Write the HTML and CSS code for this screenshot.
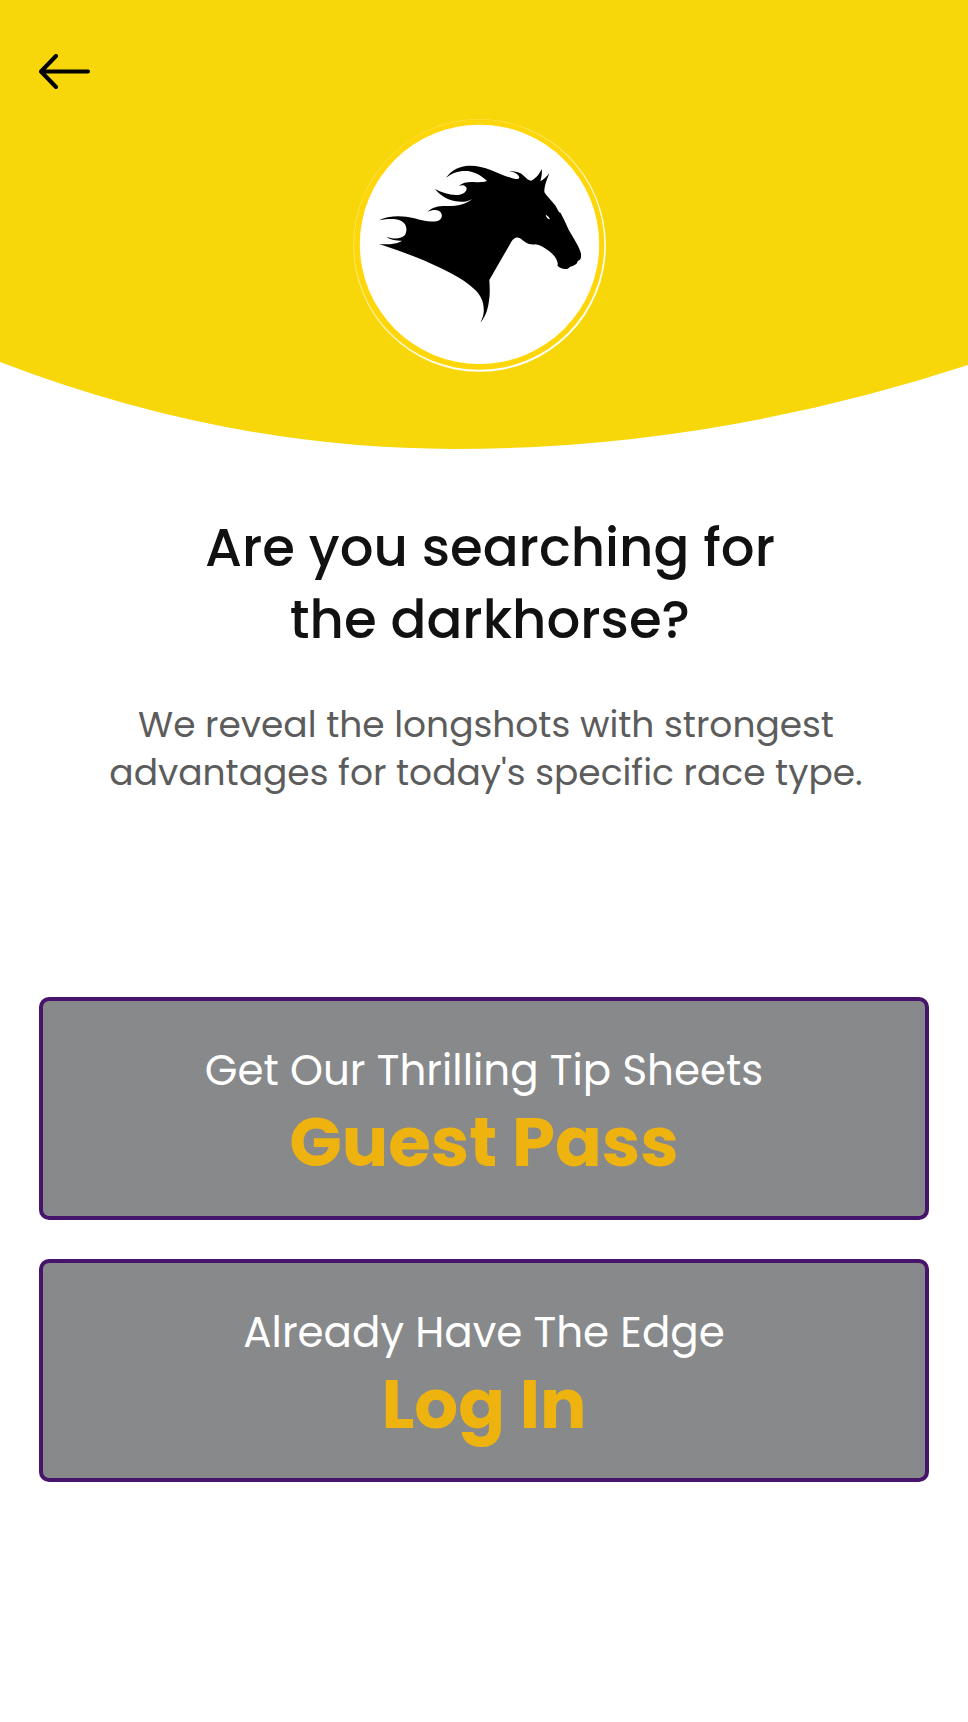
FILE: index.html
```html
<!DOCTYPE html>
<html lang="en">
<head>
<meta charset="utf-8">
<meta name="viewport" content="width=device-width, initial-scale=1">
<title>Darkhorse</title>
<link rel="stylesheet" href="styles.css">
</head>
<body>
<header class="hero">
  <svg class="hero-curve" viewBox="0 0 968 449" preserveAspectRatio="none" aria-hidden="true">
    <path d="M0 0H968V365Q711 449 454 449Q227 449 0 362Z"/>
  </svg>
  <button class="back" type="button" aria-label="Back">
    <svg viewBox="0 0 52 36" aria-hidden="true">
      <path d="M17 2L2 17.500L17 33M3 17.500H49"/>
    </svg>
  </button>
  <svg class="logo" viewBox="30 27 804 762" role="img" aria-label="Darkhorse logo">
    <defs>
      <linearGradient id="rim" x1="0" y1="0" x2="1" y2="1">
        <stop offset="0.300" stop-color="#fbe766"/>
        <stop offset="0.700" stop-color="#fff"/>
      </linearGradient>
    </defs>
    <circle fill="url(#rim)" cx="418.500" cy="406.500" r="379"/>
    <circle class="logo-ring" cx="417.500" cy="404" r="375.500"/>
    <circle class="logo-disc" cx="418.500" cy="403" r="359"/>
    <path class="logo-horse" d="M318 204C334 180 358 168 388 167C435 166 475 192 517 205C528 208 537 207 538 203C536 192 524 186 504 184C525 183 540 186 551 197C559 205 566 211 574 212C588 205 598 193 605 178C607 190 604 204 601 214C611 209 621 199 628 189C622 208 613 224 613 246C620 260 639 274 650 293C654 300 655 307 662 309C671 326 679 343 686 359C701 386 719 411 723 431C723 439 724 443 720 449C713 452 712 455 711 460C705 466 698 469 690 470C687 474 683 477 676 477C668 477 659 474 653 468V459C651 446 640 433 628 424C614 413 599 404 586 403C574 405 562 402 551 393C543 386 534 380 526 384C518 387 513 396 509 404L448 510C449 530 451 551 446 579C442 604 435 622 421 638C431 620 434 604 429 580C424 553 401 533 369 511C313 475 228 438 117 402C136 403 170 404 186 392C169 392 149 389 140 380C158 388 181 387 192 378C201 370 201 353 195 343C184 326 157 324 117 331C144 316 187 315 223 325C247 332 271 338 293 333C304 330 307 321 305 313C300 298 281 297 263 306C276 291 294 288 317 288C349 289 376 284 397 267C380 277 363 276 347 274C319 269 300 255 285 237C310 250 334 257 359 254C374 252 384 239 378 231C373 224 366 225 357 227C369 218 382 215 402 216C416 217 432 217 441 213C430 201 408 188 388 184C363 180 336 188 318 204Z"/>
    <path class="logo-eye" d="M617 314C622 316 628 322 630 328C624 328 618 322 617 314Z"/>
  </svg>
</header>
<main class="content">
  <h1 class="title">Are you searching for<br>the darkhorse?</h1>
  <p class="intro">We reveal the longshots with strongest<br>advantages for today's specific race type.</p>
  <div class="actions">
    <button class="action" type="button">
      <span class="action-note">Get Our Thrilling Tip Sheets</span>
      <strong class="action-name">Guest Pass</strong>
    </button>
    <button class="action" type="button">
      <span class="action-note">Already Have The Edge</span>
      <strong class="action-name">Log In</strong>
    </button>
  </div>
</main>
</body>
</html>
```
FILE: styles.css
```css
* {
  box-sizing: border-box;
}

body {
  margin: 0;
  background: #fff;
  color: #111;
  font-family: Poppins, Inter, "Open Sans", sans-serif;
}

.hero {
  position: relative;
  display: flex;
  flex-direction: column;
  padding: 48px 32px 76px;
}

.hero-curve {
  position: absolute;
  inset: 0;
  z-index: -1;
  width: 100%;
  height: 100%;
  fill: #f7d70a;
}

.back {
  display: flex;
  align-items: center;
  align-self: flex-start;
  height: 48px;
  padding: 0 7px;
  border: 0;
  background: none;
  cursor: pointer;
}

.back svg {
  width: 52px;
  height: 36px;
  fill: none;
  stroke: #000;
  stroke-width: 4;
  stroke-linecap: round;
  stroke-linejoin: round;
}

.logo {
  align-self: center;
  width: 268px;
  height: 254px;
  margin-top: 23px;
}

.logo-ring {
  fill: #ffd60a;
}

.logo-disc,
.logo-eye {
  fill: #fff;
}

.logo-horse {
  fill: #000;
}

.content {
  padding: 63px 39px;
  text-align: center;
}

.title {
  margin: 0;
  padding-left: 12px;
  font-size: 53px;
  font-weight: 500;
  line-height: 72px;
}

.intro {
  margin: 45px 0 0;
  padding-left: 4px;
  color: #5c5c5c;
  font-size: 36px;
  font-weight: 400;
  line-height: 48px;
}

.actions {
  display: grid;
  gap: 39px;
  margin-top: 200px;
}

.action {
  display: flex;
  flex-direction: column;
  align-items: center;
  padding: 40px 24px 33px;
  border: 4px solid #47146b;
  border-radius: 10px;
  background: #88898a;
  color: #fff;
  font: inherit;
  cursor: pointer;
}

.action-note {
  font-size: 42px;
  font-weight: 400;
  line-height: 60px;
}

.action-name {
  color: #efb310;
  font-size: 69px;
  font-weight: 700;
  line-height: 82px;
}
```
